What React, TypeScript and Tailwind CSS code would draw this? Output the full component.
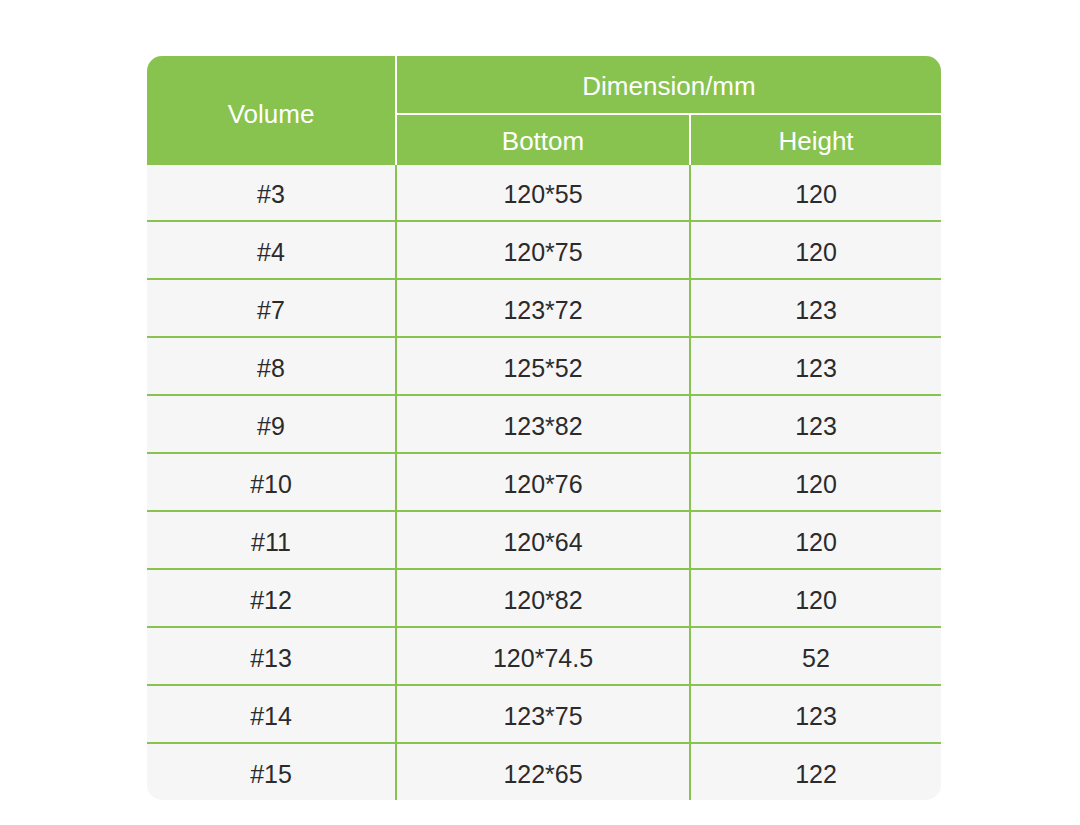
const rows = [
  ["#3", "120*55", "120"],
  ["#4", "120*75", "120"],
  ["#7", "123*72", "123"],
  ["#8", "125*52", "123"],
  ["#9", "123*82", "123"],
  ["#10", "120*76", "120"],
  ["#11", "120*64", "120"],
  ["#12", "120*82", "120"],
  ["#13", "120*74.5", "52"],
  ["#14", "123*75", "123"],
  ["#15", "122*65", "122"],
]

export default function App() {
  return (
    <div className="min-h-[825px] w-[1080px] bg-white pt-[56px] font-['Liberation_Sans',Arial,sans-serif] text-[25px]">
      <div className="ml-[147px] w-[794px] overflow-hidden rounded-[15px] bg-[#f6f6f6]">
        {/* header */}
        <div className="flex h-[109px] bg-[#88c34f] text-[26px] text-white">
          <div className="flex w-[250px] items-center justify-center border-r-2 border-white pt-[8px]">
            Volume
          </div>
          <div className="flex flex-1 flex-col">
            <div className="flex h-[59px] items-center justify-center border-b-2 border-white pt-[4px]">
              Dimension/mm
            </div>
            <div className="flex flex-1">
              <div className="flex w-[294px] items-center justify-center border-r-2 border-white pt-[2px]">
                Bottom
              </div>
              <div className="flex flex-1 items-center justify-center pt-[2px]">Height</div>
            </div>
          </div>
        </div>

        {/* rows */}
        {rows.map((r, i) => (
          <div
            key={r[0]}
            className={
              i === 0
                ? "flex h-[55px] text-[#2b2b2b]"
                : "flex h-[58px] border-t-2 border-[#88c34f] text-[#2b2b2b]"
            }
          >
            <div className="flex w-[250px] items-center justify-center border-r-2 border-[#88c34f] pt-[5px]">
              {r[0]}
            </div>
            <div className="flex w-[294px] items-center justify-center border-r-2 border-[#88c34f] pt-[5px]">
              {r[1]}
            </div>
            <div className="flex flex-1 items-center justify-center pt-[5px]">{r[2]}</div>
          </div>
        ))}
      </div>
    </div>
  )
}
